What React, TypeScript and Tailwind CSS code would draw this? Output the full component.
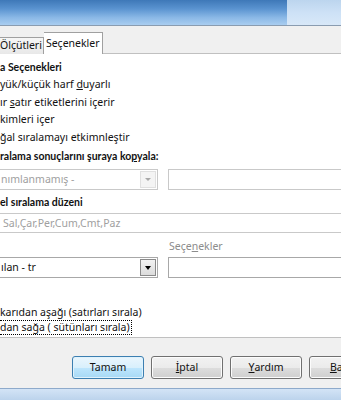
import React from "react";

const Check = ({ children }: { children: React.ReactNode }) => (
  <div className="h-[17.5px] leading-[17.5px] whitespace-nowrap">{children}</div>
);

const Heading = ({ children, className }: { children: React.ReactNode; className?: string }) => (
  <div className={"font-['Lato',sans-serif] font-bold text-[10.5px] whitespace-nowrap " + (className ?? "")}>
    {children}
  </div>
);

const Btn = ({ children, primary }: { children: React.ReactNode; primary?: boolean }) => (
  <div
    className={
      "w-[72px] h-[23px] shrink-0 rounded-[3px] border flex items-center justify-center " +
      (primary
        ? "border-[#3c7fb1] bg-[linear-gradient(#eaf6fd,#d9f0fc_50%,#bee6fd_51%,#a7d9f5)] shadow-[inset_0_0_0_1px_#e0f2fc]"
        : "border-[#707070] bg-[linear-gradient(#f2f2f2,#ebebeb_50%,#dddddd_51%,#cfcfcf)] shadow-[inset_0_0_0_1px_#fcfcfc]")
    }
  >
    {children}
  </div>
);

export default function App() {
  return (
    <div className="w-[341px] h-[400px] overflow-hidden flex flex-col bg-[#f0f0f0] text-[10.5px] text-[#111] font-['Noto_Sans','Open_Sans',sans-serif]">
      {/* title bar */}
      <div className="h-[26px] flex shrink-0 border-b border-[#8a9cb0]">
        <div className="flex-1 bg-[linear-gradient(#3e78b8,#5a93d0_35%,#8ab8e6_70%,#a9cdf0)]" />
        <div className="w-[54px] bg-[linear-gradient(#bcd5ee,#cde1f6_50%,#d8e8f8)]" />
      </div>

      {/* tab strip */}
      <div className="h-[27px] shrink-0 flex items-end relative z-10">
        <div className="h-[17px] pr-[1px] border-r border-t border-[#a0a0a0] bg-[linear-gradient(#f6f6f6,#e8e8e8)] leading-[15px] whitespace-nowrap -mb-px">
          Ölçütleri
        </div>
        <div className="h-[22px] px-[2px] border border-b-0 border-l-0 border-[#a0a0a0] bg-white leading-[20px] whitespace-nowrap -mb-px">
          Seçenekler
        </div>
      </div>

      {/* panel */}
      <div className="h-[285px] shrink-0 bg-white border-t border-b border-[#c0c0c0] overflow-hidden">
        <div className="pt-[4px]">
          <Heading className="h-[18px] leading-[18px]">a Seçenekleri</Heading>
          <Check>
            yük/küçük harf <span className="underline">d</span>uyarlı
          </Check>
          <Check>
            ır <span className="underline">s</span>atır etiketlerini içerir
          </Check>
          <Check>kimleri içer</Check>
          <Check>ğal sıralamayı etkimnleştir</Check>
          <Heading className="h-[18px] leading-[18px] mt-[1px]">
            ralama sonuçlarını şuraya ko<span className="underline">p</span>yala:
          </Heading>
          <div className="flex gap-[10px] mt-[4px] h-[21px]">
            <div className="w-[158px] shrink-0 flex border border-l-0 border-[#c9c9c9] bg-white">
              <div className="flex-1 pl-[1px] leading-[19px] text-[#a0a0a0] whitespace-nowrap">nımlanmamış -</div>
              <div className="w-[16px] m-px border border-[#e0e0e0] bg-[#f4f4f4] flex items-center justify-center">
                <div className="w-0 h-0 border-l-[3px] border-r-[3px] border-t-[3px] border-l-transparent border-r-transparent border-t-[#a8a8a8]" />
              </div>
            </div>
            <div className="flex-1 border border-[#c9c9c9] mr-[-20px]" />
          </div>
          <Heading className="h-[17px] leading-[17px] mt-[4px]">el sıralama düzeni</Heading>
          <div className="h-[20px] mt-[2px] border border-l-0 border-[#c9c9c9] mr-[-20px] pl-[3px] leading-[18px] text-[#a0a0a0] whitespace-nowrap">
            Sal,Çar,Per,Cum,Cmt,Paz
          </div>
          <div className="h-[17px] leading-[17px] mt-[5px] pl-[169px] text-[#8c8c8c] whitespace-nowrap">
            Seçe<span className="underline">n</span>ekler
          </div>
          <div className="flex gap-[10px] mt-[2px] h-[21px]">
            <div className="w-[158px] shrink-0 flex border border-l-0 border-[#a8a8a8] bg-white">
              <div className="flex-1 pl-[1px] leading-[19px] whitespace-nowrap">ılan - tr</div>
              <div className="w-[16px] m-px border border-[#8a8a8a] bg-[linear-gradient(#f2f2f2,#dcdcdc)] flex items-center justify-center">
                <div className="w-0 h-0 border-l-[3.5px] border-r-[3.5px] border-t-[4px] border-l-transparent border-r-transparent border-t-black" />
              </div>
            </div>
            <div className="flex-1 border border-[#a8a8a8] mr-[-20px]" />
          </div>
          <div className="h-[15px] leading-[15px] mt-[27px] whitespace-nowrap">karıdan aşağı (satırları sırala)</div>
          <div className="h-[15px] leading-[13px] w-fit pr-[1px] border border-l-0 border-dotted border-black whitespace-nowrap">
            dan sağa ( sütünları sırala)
          </div>
        </div>
      </div>

      {/* buttons */}
      <div className="flex-1 flex gap-[7px] pl-[72px] pt-[18px]">
        <Btn primary>Tamam</Btn>
        <Btn>
          <span className="underline">İ</span>ptal
        </Btn>
        <Btn>
          <span className="underline">Y</span>ardım
        </Btn>
        <Btn>
          <span className="underline">B</span>aşlat
        </Btn>
      </div>

      {/* bottom frame */}
      <div className="h-[12px] shrink-0 border-t border-[#8eaacb] bg-[linear-gradient(#d3e4f6,#bcd3ec)]" />
    </div>
  );
}
